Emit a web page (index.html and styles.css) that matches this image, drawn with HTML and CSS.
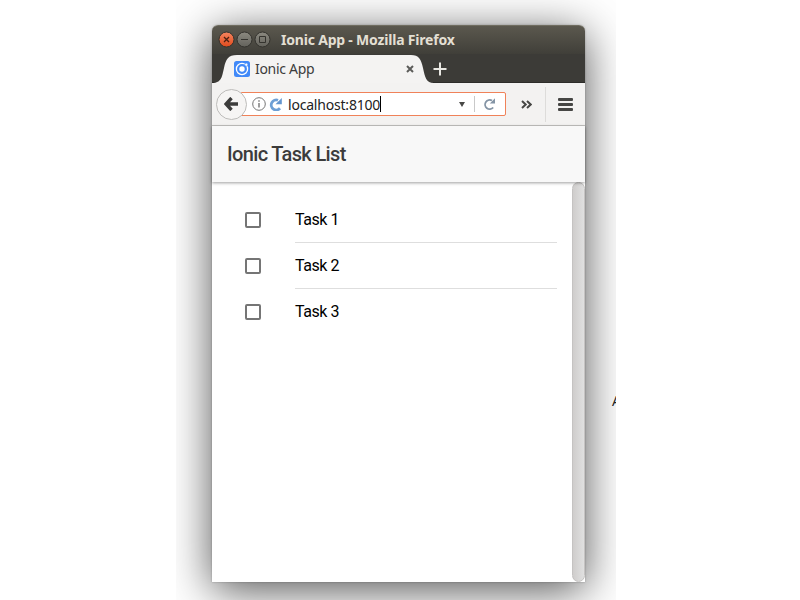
FILE: index.html
```html
<!DOCTYPE html>
<html lang="en">
<head>
<meta charset="utf-8">
<title>Ionic App</title>
<link rel="stylesheet" href="styles.css">
</head>
<body>
<main class="stage">
  <section class="window">
    <header class="titlebar">
      <svg class="controls" width="60" height="20" viewBox="0 0 60 20">
        <defs>
          <linearGradient id="red" x2="0" y2="1"><stop offset="0" stop-color="#f58560"/><stop offset="1" stop-color="#df4a1c"/></linearGradient>
          <linearGradient id="gray" x2="0" y2="1"><stop offset="0" stop-color="#8b8980"/><stop offset="1" stop-color="#63625b"/></linearGradient>
        </defs>
        <g stroke="#33322d">
          <circle cx="14.500" cy="14.500" r="7.500" fill="url(#red)"/>
          <circle cx="32.500" cy="14.500" r="7.500" fill="url(#gray)"/>
          <circle cx="50.500" cy="14.500" r="7.500" fill="url(#gray)"/>
        </g>
        <path d="M12 12l5 5M17 12l-5 5" stroke="#4a2012" stroke-width="1.3"/>
        <path d="M29 14.500h7M47.500 11.500h6v6h-6z" stroke="#34332e" fill="none"/>
      </svg>
      <h1 class="window-title">Ionic App - Mozilla Firefox</h1>
    </header>
    <div class="tabs">
      <svg class="tab-shape" width="222" height="28" viewBox="0 0 222 28">
        <path d="M0 28C10 28 10 21 12 13C14 4 16 0 25 0H199C207 0 209 4 211 13C213 22 214 28 222 28Z" fill="#f4f3f2"/>
      </svg>
      <div class="tab">
        <svg width="16" height="16" viewBox="0 0 16 16">
          <rect width="16" height="16" rx="2.500" fill="#4189f8"/>
          <circle cx="8" cy="8" r="5.600" fill="none" stroke="#fff" stroke-width="1.300"/>
          <circle cx="8" cy="8" r="2.700" fill="#fff"/>
          <circle cx="12.300" cy="3.700" r="1.600" fill="#fff" stroke="#4189f8" stroke-width=".7"/>
        </svg>
        <span class="tab-label">Ionic App</span>
        <svg class="tab-close" width="8" height="8" viewBox="0 0 8 8"><path d="M1 1l6 6M7 1l-6 6" stroke="#5c5c5a" stroke-width="2"/></svg>
      </div>
      <svg class="new-tab" width="14" height="14" viewBox="0 0 14 14"><path d="M7 .5v13M.5 7h13" stroke="#e9e8e3" stroke-width="2"/></svg>
    </div>
    <nav class="toolbar">
      <div class="back">
        <svg width="14" height="14" viewBox="0 0 14 14"><path d="M7.500 1L2 7l5.500 6M2.500 7H14" fill="none" stroke="#3c3c3b" stroke-width="3.400"/></svg>
      </div>
      <div class="address">
        <svg class="info" width="14" height="14" viewBox="0 0 14 14"><circle cx="7" cy="7" r="6.300" fill="none" stroke="#757575"/><path d="M7 6v4.500M7 3.200v1.500" stroke="#757575" stroke-width="1.400"/></svg>
        <svg class="site" width="13" height="13" viewBox="0 0 13 13"><path d="M11 10.300A5 5 0 1 1 9 2.300" fill="none" stroke="#6d9fd5" stroke-width="2.800"/><path d="M12.800 0v6.300H6.500z" fill="#6496cf"/></svg>
        <span class="url">localhost:8100</span><i class="caret"></i>
        <svg class="drop" width="6" height="5" viewBox="0 0 6 5"><path d="M0 0h6L3 5z" fill="#484846"/></svg>
        <i class="divider"></i>
        <svg class="reload" width="11" height="12" viewBox="0 0 11 12"><path d="M9.200 9.500A4.600 4.600 0 1 1 8 2.500" fill="none" stroke="#8494a5" stroke-width="1.800"/><path d="M11 .3v5.200H5.800z" fill="#8494a5"/></svg>
      </div>
      <svg class="more" width="11" height="9" viewBox="0 0 11 9"><path d="M1 1l3.700 3.500L1 8M6 1l3.700 3.500L6 8" fill="none" stroke="#464644" stroke-width="2"/></svg>
      <i class="tool-divider"></i>
      <svg class="menu" width="15" height="13" viewBox="0 0 15 13"><g fill="#464644"><rect width="15" height="3" rx="1"/><rect y="5" width="15" height="3" rx="1"/><rect y="10" width="15" height="3" rx="1"/></g></svg>
    </nav>
    <div class="app-header"><h2>Ionic Task List</h2></div>
    <div class="content">
      <ul class="tasks">
        <li><i class="box"></i><span class="task">Task 1</span></li>
        <li><i class="box"></i><span class="task">Task 2</span></li>
        <li><i class="box"></i><span class="task">Task 3</span></li>
      </ul>
      <div class="scrollbar"></div>
    </div>
  </section>
  <span class="desktop-text">A</span>
</main>
</body>
</html>
```
FILE: styles.css
```css
* { box-sizing: border-box; }
body { margin: 0; background: #fff; overflow: hidden; }
svg { display: block; flex: none; }
h1, h2, ul { margin: 0; padding: 0; }

.stage {
  position: relative;
  width: 440px;
  height: 600px;
  margin-left: 176px;
  padding: 25px 31px 18px 36px;
  overflow: hidden;
}
.window {
  display: flex;
  flex-direction: column;
  width: 373px;
  height: 557px;
  border-radius: 6px 6px 0 0;
  background: #fff;
  box-shadow: 0 0 2px rgba(0, 0, 0, .3), 0 8px 45px rgba(0, 0, 0, .68);
}
.titlebar {
  display: flex;
  height: 29px;
  border-top: 1px solid #706d60;
  border-radius: 6px 6px 0 0;
  background: linear-gradient(#5b584e, #403f39);
}
.controls { margin-top: -1px; overflow: visible; }
.window-title {
  margin-left: 9px;
  font: bold 14px/28px "Noto Sans", sans-serif;
  letter-spacing: -.2px;
  color: #e3dfd3;
  white-space: nowrap;
}
.tabs {
  position: relative;
  display: flex;
  height: 29px;
  padding-top: 1px;
  background: #3c3b37;
  border-bottom: 1px solid #2d2c29;
}
.tab-shape { position: absolute; left: 0; top: 1px; }
.tab {
  position: relative;
  display: flex;
  align-items: center;
  width: 202px;
  padding-left: 22px;
}
.tab-label {
  margin-left: 5px;
  font: 14px/28px "Noto Sans", sans-serif;
  letter-spacing: -.3px;
  color: #3c3c3c;
  white-space: nowrap;
}
.tab-close { margin-left: auto; }
.new-tab { margin: 7px 0 0 19px; }
.toolbar {
  display: flex;
  align-items: center;
  height: 43px;
  border-bottom: 1px solid #c4c3c1;
  background: #f3f2f1;
}
.back {
  position: relative;
  z-index: 1;
  display: flex;
  align-items: center;
  justify-content: center;
  width: 31px;
  height: 31px;
  margin-left: 4px;
  padding-right: 1px;
  border: 1px solid #bdbcba;
  border-radius: 50%;
  background: #f6f5f4;
}
.address {
  display: flex;
  align-items: center;
  width: 265px;
  height: 24px;
  margin-left: -6px;
  padding-left: 10px;
  border: 1px solid #f08259;
  border-radius: 0 2px 2px 0;
  background: #fff;
}
.site { margin-left: 3px; }
.url {
  width: 92px;
  margin-left: 6px;
  padding-top: 1px;
  font: 14px/21px "Noto Sans", sans-serif;
  letter-spacing: -.2px;
  color: #222;
  white-space: nowrap;
}
.caret { width: 1px; height: 16px; background: #000; }
.drop { margin-left: 78px; }
.divider { width: 1px; height: 16px; margin-left: 9px; background: #c9c9c9; }
.reload { margin-left: 9px; }
.more { margin-left: 15px; }
.tool-divider { width: 1px; height: 35px; margin-left: 13px; background: #dddcda; }
.menu { margin-left: 12px; }
.app-header {
  position: relative;
  height: 56px;
  padding-left: 15px;
  background: #f8f8f8;
  box-shadow: 0 1px 3px rgba(0, 0, 0, .38);
}
.app-header h2 {
  font: 500 20px/56px Roboto, sans-serif;
  letter-spacing: -.65px;
  color: #3c3c3c;
}
.content { display: flex; flex: 1; }
.tasks { width: 360px; padding: 15px 15px 0 33px; list-style: none; }
.tasks li { display: flex; height: 46px; align-items: center; }
.box {
  width: 16px;
  height: 16px;
  border: 2px solid #757575;
  border-radius: 2px;
}
.task {
  flex: 1;
  height: 46px;
  margin-left: 34px;
  border-bottom: 1px solid #dedede;
  font: 16px/45px Roboto, sans-serif;
  letter-spacing: -.45px;
  color: #000;
}
.tasks li:last-child .task { border: 0; }
.scrollbar {
  width: 13px;
  height: 400px;
  border: 1px solid #c5c3c2;
  border-radius: 7px;
  background: linear-gradient(90deg, #cfcdcc, #e0e0e0);
}
.desktop-text {
  position: absolute;
  left: 436px;
  top: 393px;
  font: 14px/16px "Noto Sans", sans-serif;
  color: #222;
}
```
